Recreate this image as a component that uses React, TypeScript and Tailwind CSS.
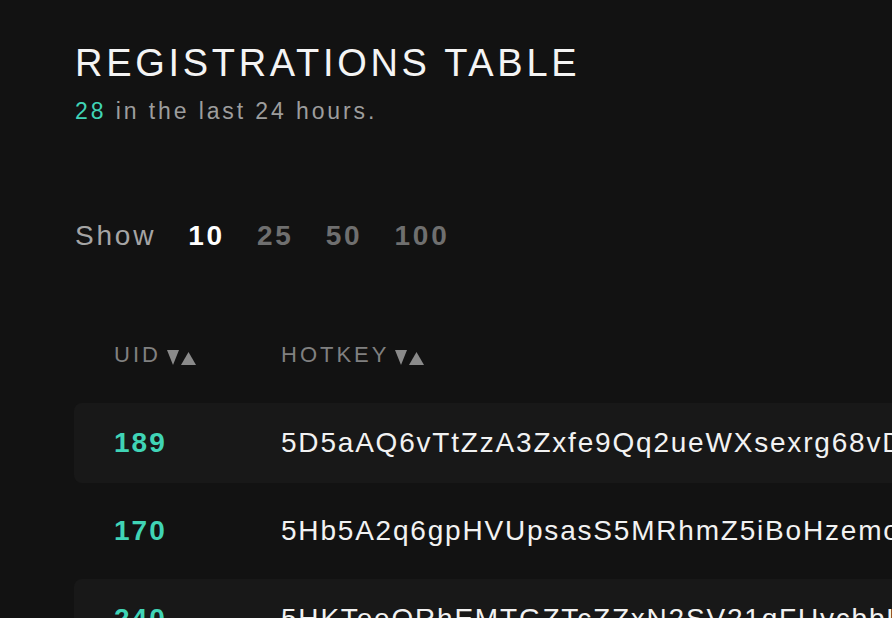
const rows = [
    { uid: 189, hotkey: '5D5aAQ6vTtZzA3Zxfe9Qq2ueWXsexrg68vDmRbKKkqKkJr4A' },
    { uid: 170, hotkey: '5Hb5A2q6gpHVUpsasS5MRhmZ5iBoHzemoE3xWhcQMuA7kqXe' },
    { uid: 240, hotkey: '5HKTeeQRhEMTGZTcZZxN2SV21qFUycbbLjAb3d8vz6wWmJrP' },
    { uid: 12, hotkey: '5FqACMtcegZxxopgu1g7TgyrnyD8skurr9QDPLPhxNQzsThe' },
    { uid: 77, hotkey: '5CkBq3Xz3yrNW2wQhWbPZ2kNKovRWtb6QE4jdLqnUBN1vFbT' },
];

const PAGE_SIZES = [10, 25, 50, 100];

function SortIcon() {
    return (
        <svg width="29" height="15" viewBox="0 0 29 15" className="ml-[6px] mt-[6px] shrink-0">
            <polygon points="0,0 12,0 6,15" fill="#8a8a8a" />
            <polygon points="14,15 29,15 21.5,2" fill="#8a8a8a" />
        </svg>
    );
}

export default function App() {
    const selected = 10;

    return (
        <div className="h-screen overflow-hidden bg-[#121212] font-['Liberation_Sans',Arial,sans-serif]">
            <div className="pl-[75px] pt-[44px]">
                <h1 className="text-[38px] leading-[38px] tracking-[3.7px] text-[#f4f4f4] font-normal">
                    REGISTRATIONS TABLE
                </h1>
                <p className="mt-[18px] text-[23px] leading-[23px] tracking-[2.9px] text-[#9d9d9d]">
                    <span className="text-[#40d4b6]">28</span> in the last 24 hours.
                </p>

                <div className="mt-[99px] flex items-center gap-8 text-[28px] leading-[28px] tracking-[2.8px]">
                    <span className="text-[#a5a5a5]">Show</span>
                    {PAGE_SIZES.map((size) => (
                        <button
                            key={size}
                            className={
                                size === selected
                                    ? 'font-bold text-white'
                                    : 'font-bold text-[#6f6f6f]'
                            }
                        >
                            {size}
                        </button>
                    ))}
                </div>
            </div>

            <div className="pl-[74px]">
                <div className="w-[1500px]">
                    {/* header */}
                    <div className="mt-[94px] flex text-[22px] leading-[22px] tracking-[3px] text-[#808080]">
                        <div className="w-[207px] pl-[40px] flex items-start">
                            <span>UID</span>
                            <SortIcon />
                        </div>
                        <div className="flex items-start">
                            <span>HOTKEY</span>
                            <SortIcon />
                        </div>
                    </div>

                    {/* rows */}
                    <div className="mt-[37px] flex flex-col gap-2">
                        {rows.map((row, i) => (
                            <div
                                key={row.uid}
                                className={
                                    i % 2 === 0
                                        ? 'flex h-20 items-center rounded-lg bg-[#181818]'
                                        : 'flex h-20 items-center rounded-lg'
                                }
                            >
                                <div className="w-[207px] pl-[40px] text-[28px] leading-[28px] tracking-[2px] font-bold text-[#40d4b6]">
                                    {row.uid}
                                </div>
                                <div className="whitespace-nowrap text-[28px] leading-[28px] tracking-[1.8px] text-[#f2f2f2]">
                                    {row.hotkey}
                                </div>
                            </div>
                        ))}
                    </div>
                </div>
            </div>
        </div>
    );
}
